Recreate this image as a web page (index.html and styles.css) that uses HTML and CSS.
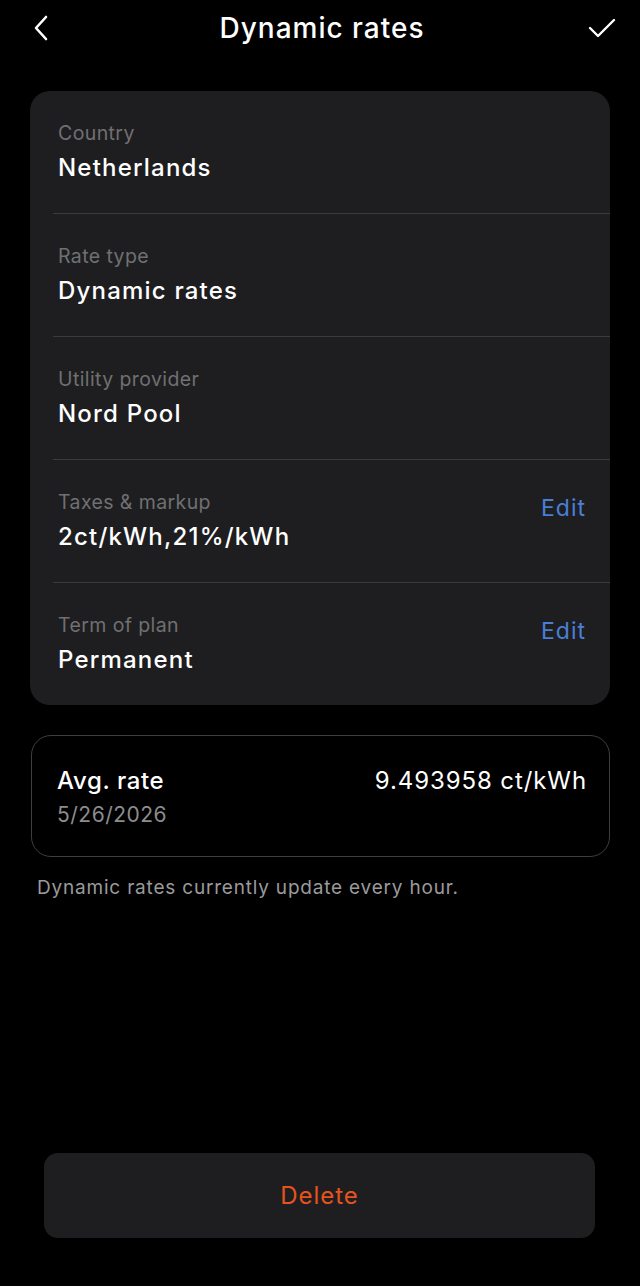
FILE: index.html
```html
<!DOCTYPE html>
<html lang="en">
<head>
  <meta charset="UTF-8" />
  <meta name="viewport" content="width=device-width, initial-scale=1.0" />
  <title>Dynamic rates</title>
  <link rel="stylesheet" href="styles.css">
</head>
<body>
  <header class="topbar">
    <button class="icon-btn" type="button" aria-label="Back">
      <svg width="22" height="30" viewBox="0 0 22 30"><path d="M15 4 L5 15 L15 26" fill="none" stroke="#fff" stroke-width="2.6" stroke-linecap="round" stroke-linejoin="round"/></svg>
    </button>
    <h1>Dynamic rates</h1>
    <button class="icon-btn" type="button" aria-label="Save">
      <svg width="30" height="30" viewBox="0 0 30 30"><path d="M3 15 L11 23 L27 7" fill="none" stroke="#fff" stroke-width="2.4" stroke-linecap="round" stroke-linejoin="round"/></svg>
    </button>
  </header>

  <div class="settings">
    <div class="row">
      <div class="row-text">
        <div class="label">Country</div>
        <div class="value">Netherlands</div>
      </div>
    </div>
    <div class="row">
      <div class="row-text">
        <div class="label">Rate type</div>
        <div class="value">Dynamic rates</div>
      </div>
    </div>
    <div class="row">
      <div class="row-text">
        <div class="label">Utility provider</div>
        <div class="value">Nord Pool</div>
      </div>
    </div>
    <div class="row">
      <div class="row-text">
        <div class="label">Taxes &amp; markup</div>
        <div class="value">2ct/kWh,21%/kWh</div>
      </div>
      <a class="edit" href="#">Edit</a>
    </div>
    <div class="row">
      <div class="row-text">
        <div class="label">Term of plan</div>
        <div class="value">Permanent</div>
      </div>
      <a class="edit" href="#">Edit</a>
    </div>
  </div>

  <div class="avg">
    <div>
      <div class="avg-title">Avg. rate</div>
      <div class="avg-date">5/26/2026</div>
    </div>
    <div class="avg-value">9.493958 ct/kWh</div>
  </div>
  <p class="note">Dynamic rates currently update every hour.</p>

  <div class="footer">
    <button class="btn-delete" type="button">Delete</button>
  </div>
</body>
</html>
```

FILE: styles.css
```css
body {
  font-family: Inter, 'Noto Sans', sans-serif;
  background: #000;
  color: #fff;
  margin: 0;
  padding: 0;
  height: 1286px;
  display: flex;
  flex-direction: column;
}
.topbar {
  height: 56px;
  display: flex;
  align-items: center;
  justify-content: space-between;
  padding: 0 22px 0 26px;
}
.topbar h1 {
  margin: 0;
  font-size: 28px;
  font-weight: 500;
  letter-spacing: 1px;
}
.icon-btn {
  background: none;
  border: none;
  padding: 0;
  display: flex;
  width: 32px;
  justify-content: center;
}
.settings {
  margin: 35px 30px 0;
  background: #1e1e20;
  border-radius: 20px;
  overflow: hidden;
}
.row {
  margin-left: 23px;
  padding: 0 24px 0 5px;
  height: 122px;
  display: flex;
  justify-content: space-between;
  align-items: flex-start;
  border-top: 1px solid #3a3a3c;
}
.row:first-child {
  border-top: none;
}
.label {
  margin-top: 29px;
  font-size: 19.5px;
  line-height: 26px;
  color: #707072;
  letter-spacing: 0.4px;
}
.value {
  margin-top: 6px;
  font-size: 24px;
  line-height: 32px;
  font-weight: 500;
  letter-spacing: 1.2px;
}
.edit {
  margin-top: 34px;
  font-size: 23px;
  line-height: 28px;
  color: #4a7fd8;
  letter-spacing: 1px;
  text-decoration: none;
}
.avg {
  margin: 30px 30px 0 31px;
  height: 122px;
  box-sizing: border-box;
  border: 1.5px solid #3e3e40;
  border-radius: 20px;
  padding: 30px 22px 0 25px;
  display: flex;
  justify-content: space-between;
  align-items: flex-start;
}
.avg-title {
  font-size: 24px;
  line-height: 30px;
  font-weight: 500;
  letter-spacing: 0.6px;
}
.avg-date {
  margin-top: 6px;
  font-size: 21px;
  line-height: 26px;
  color: #8c8c8e;
  letter-spacing: 0.5px;
}
.avg-value {
  font-size: 24px;
  line-height: 30px;
  letter-spacing: 0.9px;
}
.note {
  margin: 18px 0 0 37px;
  font-size: 19px;
  line-height: 26px;
  color: #9a9a9c;
  letter-spacing: 0.8px;
}
.footer {
  margin-top: auto;
  padding: 0 45px 48px 44px;
}
.btn-delete {
  width: 100%;
  height: 85px;
  background: #1e1e20;
  border: none;
  border-radius: 14px;
  color: #e5531e;
  font-family: Inter, 'Noto Sans', sans-serif;
  font-size: 24px;
  letter-spacing: 1px;
}
```
